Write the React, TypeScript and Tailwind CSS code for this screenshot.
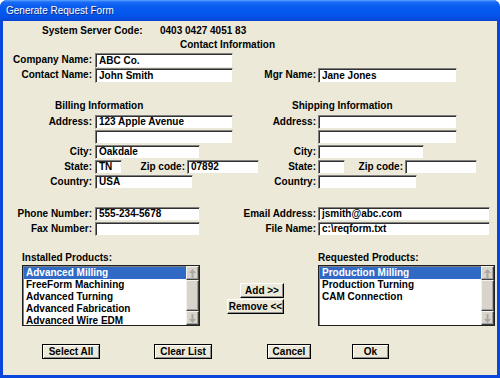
import React from "react";

const inputCls =
  "shrink-0 bg-white border border-t-[#808080] border-l-[#808080] border-b-[#ece9d8] border-r-[#ece9d8] shadow-[inset_1px_1px_0_#303030] pl-[3px] leading-[12px] flex items-center overflow-hidden whitespace-nowrap";

function Field({ w, h = "h-[14px]", value = "" }: { w: string; h?: string; value?: string }) {
  return <div className={`${inputCls} ${w} ${h} ml-[3px]`}>{value}</div>;
}
function FieldR({ w, h = "h-[14px]", value = "" }: { w: string; h?: string; value?: string }) {
  return <div className={`${inputCls} ${w} ${h} ml-[2px]`}>{value}</div>;
}

function LRow({ label, children, h = "h-[15px]" }: { label: string; children: React.ReactNode; h?: string }) {
  return (
    <div className={`flex items-start ${h}`}>
      <div className="w-[89px] text-right shrink-0 leading-[14px]">{label}</div>
      {children}
    </div>
  );
}
function RRow({ label, children, h = "h-[15px]" }: { label: string; children: React.ReactNode; h?: string }) {
  return (
    <div className={`flex items-start ${h}`}>
      <div className="w-[76px] text-right shrink-0 leading-[14px]">{label}</div>
      {children}
    </div>
  );
}

function Arrow({ up }: { up: boolean }) {
  return (
    <svg width="7" height="9" viewBox="0 0 7 9">
      {up ? (
        <g fill="#a8a8a0">
          <polygon points="3.5,0 7,4 0,4" />
          <rect x="2.5" y="4" width="2" height="5" />
        </g>
      ) : (
        <g fill="#a8a8a0">
          <polygon points="3.5,9 7,5 0,5" />
          <rect x="2.5" y="0" width="2" height="5" />
        </g>
      )}
    </svg>
  );
}

const bevel =
  "bg-[#d8d4cc] border border-t-[#f4f2ec] border-l-[#f4f2ec] border-b-[#404040] border-r-[#404040] shadow-[inset_-1px_-1px_0_#a0a0a0]";

function ScrollBar() {
  return (
    <div className="w-[13px] flex flex-col shrink-0 bg-[#e8e6e0]">
      <div className={`${bevel} h-[14px] flex items-center justify-center`}>
        <Arrow up />
      </div>
      <div className={`${bevel} flex-1`} />
      <div className={`${bevel} h-[14px] flex items-center justify-center`}>
        <Arrow up={false} />
      </div>
    </div>
  );
}

function ListBox({ items, w }: { items: string[]; w: string }) {
  return (
    <div className={`${w} h-[61px] flex bg-white border border-[#202020] shadow-[inset_1px_1px_0_#808080] mt-[1px]`}>
      <div className="flex-1 flex flex-col pt-[1px] pl-[1px] overflow-hidden">
        {items.map((it, i) => (
          <div
            key={it}
            className={`h-[12px] leading-[12px] pl-[2px] whitespace-nowrap ${i === 0 ? "bg-[#316ac5] text-white" : ""}`}
          >
            {it}
          </div>
        ))}
      </div>
      <ScrollBar />
    </div>
  );
}

const btnCls =
  "h-[15px] flex items-center justify-center bg-[#ece9d8] border border-black shadow-[inset_1px_1px_0_#fff,inset_-1px_-1px_0_#909090] leading-[12px]";
const smallBtnCls =
  "h-[15px] flex items-center justify-center bg-[#ece9d8] border border-t-white border-l-white border-b-black border-r-black shadow-[inset_-1px_-1px_0_#909090] leading-[12px]";

export default function App() {
  return (
    <div className="w-[500px] h-[378px] flex flex-col rounded-t-[7px] overflow-hidden bg-[#0846dc] font-['Liberation_Sans',Arial,sans-serif] text-[10px] font-bold text-black">
      <div className="h-[21px] shrink-0 flex items-center pl-[6px] bg-[linear-gradient(to_bottom,#5aa2ff_0%,#1a6cf7_10%,#0a5cf0_30%,#0558ee_60%,#0650e4_85%,#0a44cc_100%)]">
        <span className="text-white text-[10px] font-normal [text-shadow:1px_1px_0_#0a2a8a]">
          Generate Request Form
        </span>
      </div>
      <div className="flex-1 mx-[3px] mb-[3px] bg-[#ece9d8] flex flex-col">
        {/* system server code */}
        <div className="mt-[4px] h-[12px] flex items-center pl-[39px] leading-[12px]">
          <div className="w-[118px]">System Server Code:</div>
          <div>0403 0427 4051 83</div>
        </div>
        <div className="mt-[2px] h-[12px] pl-[177px] leading-[12px]">Contact Information</div>

        {/* contact */}
        <div className="mt-[2px] flex">
          <div className="w-[237px] shrink-0 flex flex-col">
            <LRow label="Company Name:">
              <Field w="w-[138px]" h="h-[15px]" value="ABC Co." />
            </LRow>
            <LRow label="Contact Name:">
              <Field w="w-[138px]" h="h-[15px]" value="John Smith" />
            </LRow>
          </div>
          <div className="flex flex-col">
            <div className="h-[15px]" />
            <RRow label="Mgr Name:">
              <FieldR w="w-[139px]" h="h-[15px]" value="Jane Jones" />
            </RRow>
          </div>
        </div>

        {/* billing / shipping */}
        <div className="mt-[17px] flex">
          <div className="w-[237px] shrink-0 flex flex-col">
            <div className="h-[12px] leading-[12px] pl-[52px]">Billing Information</div>
            <div className="h-[3px]" />
            <LRow label="Address:">
              <Field w="w-[138px]" value="123 Apple Avenue" />
            </LRow>
            <LRow label="">
              <Field w="w-[138px]" />
            </LRow>
            <LRow label="City:">
              <Field w="w-[105px]" value="Oakdale" />
            </LRow>
            <LRow label="State:">
              <Field w="w-[27px]" value="TN" />
              <div className="w-[63px] text-right shrink-0 leading-[14px]">Zip code:</div>
              <div className={`${inputCls} w-[72px] h-[14px] ml-[2px]`}>07892</div>
            </LRow>
            <LRow label="Country:">
              <Field w="w-[98px]" value="USA" />
            </LRow>
          </div>
          <div className="flex flex-col">
            <div className="h-[12px] leading-[12px] pl-[52px]">Shipping Information</div>
            <div className="h-[3px]" />
            <RRow label="Address:">
              <FieldR w="w-[139px]" />
            </RRow>
            <RRow label="">
              <FieldR w="w-[139px]" />
            </RRow>
            <RRow label="City:">
              <FieldR w="w-[106px]" />
            </RRow>
            <RRow label="State:">
              <FieldR w="w-[27px]" />
              <div className="w-[58px] text-right shrink-0 leading-[14px]">Zip code:</div>
              <div className={`${inputCls} w-[72px] h-[14px] ml-[2px]`} />
            </RRow>
            <RRow label="Country:">
              <FieldR w="w-[99px]" />
            </RRow>
          </div>
        </div>

        {/* phone / email */}
        <div className="mt-[17px] flex">
          <div className="w-[237px] shrink-0 flex flex-col">
            <LRow label="Phone Number:">
              <Field w="w-[105px]" value="555-234-5678" />
            </LRow>
            <LRow label="Fax Number:">
              <Field w="w-[105px]" />
            </LRow>
          </div>
          <div className="flex flex-col">
            <RRow label="Email Address:">
              <FieldR w="w-[172px]" value="jsmith@abc.com" />
            </RRow>
            <RRow label="File Name:">
              <FieldR w="w-[172px]" value="c:\reqform.txt" />
            </RRow>
          </div>
        </div>

        {/* products */}
        <div className="mt-[15px] flex pl-[19px]">
          <div className="w-[178px] shrink-0 flex flex-col">
            <div className="h-[12px] leading-[12px]">Installed Products:</div>
            <ListBox
              w="w-[178px]"
              items={["Advanced Milling", "FreeForm Machining", "Advanced Turning", "Advanced Fabrication", "Advanced Wire EDM"]}
            />
          </div>
          <div className="ml-[27px] w-[57px] shrink-0 flex flex-col items-end pt-[31px]">
            <div className={`${smallBtnCls} w-[44px]`}>Add &gt;&gt;</div>
            <div className={`${smallBtnCls} w-[57px] mt-[1px]`}>Remove &lt;&lt;</div>
          </div>
          <div className="ml-[34px] w-[177px] shrink-0 flex flex-col">
            <div className="h-[12px] leading-[12px]">Requested Products:</div>
            <ListBox w="w-[177px]" items={["Production Milling", "Production Turning", "CAM Connection"]} />
          </div>
        </div>

        {/* bottom buttons */}
        <div className="mt-[18px] flex pl-[39px]">
          <div className={`${btnCls} w-[58px]`}>Select All</div>
          <div className={`${btnCls} w-[58px] ml-[54px]`}>Clear List</div>
          <div className={`${btnCls} w-[44px] ml-[55px]`}>Cancel</div>
          <div className={`${btnCls} w-[37px] ml-[41px]`}>Ok</div>
        </div>
      </div>
    </div>
  );
}
